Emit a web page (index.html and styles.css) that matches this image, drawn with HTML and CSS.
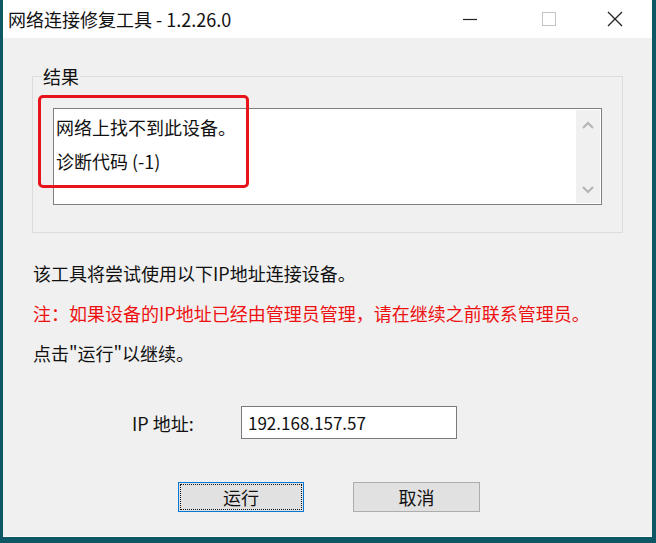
FILE: index.html
```html
<!DOCTYPE html>
<html lang="zh-CN">
<head>
    <meta charset="UTF-8">
    <title>网络连接修复工具</title>
    <link rel="stylesheet" href="styles.css">
</head>
<body>
    <div class="window">
        <div class="titlebar">
            <div class="title">网络连接修复工具 - 1.2.26.0</div>
            <div class="controls">
                <span class="ctl min">
                    <svg width="16" height="16" viewBox="0 0 16 16"><path d="M1 8.5h14" stroke="#222" stroke-width="1.2"/></svg>
                </span>
                <span class="ctl max">
                    <svg width="16" height="16" viewBox="0 0 16 16"><rect x="1.5" y="1.5" width="13" height="13" fill="none" stroke="#c4c4c4" stroke-width="1"/></svg>
                </span>
                <span class="ctl close">
                    <svg width="16" height="16" viewBox="0 0 16 16"><path d="M1 1l14 14M15 1L1 15" stroke="#222" stroke-width="1.3"/></svg>
                </span>
            </div>
        </div>

        <div class="content">
            <fieldset class="group">
                <legend>结果</legend>
                <div class="result-box">
                    <div class="result-text">
                        <div>网络上找不到此设备。</div>
                        <div>诊断代码 (-1)</div>
                    </div>
                    <div class="scrollbar">
                        <svg width="14" height="10" viewBox="0 0 14 10"><path d="M2 8l5-5 5 5" fill="none" stroke="#b4b4b4" stroke-width="2"/></svg>
                        <svg width="14" height="10" viewBox="0 0 14 10"><path d="M2 2l5 5 5-5" fill="none" stroke="#b4b4b4" stroke-width="2"/></svg>
                    </div>
                </div>
            </fieldset>

            <div class="info">
                <p>该工具将尝试使用以下IP地址连接设备。</p>
                <p class="warn">注：如果设备的IP地址已经由管理员管理，请在继续之前联系管理员。</p>
                <p>点击"运行"以继续。</p>
            </div>

            <div class="ip-row">
                <label for="ip">IP 地址:</label>
                <input type="text" id="ip" value="192.168.157.57">
            </div>

            <div class="buttons">
                <button class="btn default">运行</button>
                <button class="btn">取消</button>
            </div>
        </div>

        <!-- annotation drawn over the result box -->
        <div class="highlight"></div>
    </div>
</body>
</html>
```

FILE: styles.css
```css
body {
    margin: 0;
    padding: 0 4px 0 3px;
    background-color: #0e5866;
    font-family: "Noto Sans CJK SC", "Liberation Sans", sans-serif;
    color: #111;
    height: 543px;
    overflow: hidden;
}

.window {
    position: relative;
    width: 649px;
    height: 536px;
    background-color: #f0f0f0;
    border-bottom: 1px solid #fafafa;
}

.titlebar {
    height: 38px;
    background-color: #fff;
    display: flex;
    align-items: center;
    justify-content: space-between;
}

.title {
    font-size: 18px;
    padding-left: 5px;
    line-height: 38px;
}

.controls {
    display: flex;
    height: 38px;
    align-items: center;
}

.ctl {
    width: 16px;
    height: 16px;
    display: flex;
}

.ctl.max {
    margin-left: 63px;
}

.ctl.close {
    margin-left: 50px;
    margin-right: 29px;
}

.content {
    padding: 27px 0 0 29px;
}

.group {
    width: 549px;
    margin: 0;
    padding: 21px 20px 27px 20px;
    border: 1px solid #dcdcdc;
    min-width: 0;
}

.group legend {
    font-size: 18px;
    line-height: 22px;
    padding: 0 1px;
    margin-left: -11px;
}

.result-box {
    display: flex;
    height: 95px;
    border: 1px solid #7f7f7f;
    background-color: #fff;
}

.result-text {
    flex: 1;
    padding: 1px 0 0 2px;
    font-size: 18px;
    line-height: 34px;
}

.scrollbar {
    width: 24px;
    margin: 1px 1px 1px 0;
    background-color: #f0f0f0;
    display: flex;
    flex-direction: column;
    align-items: center;
    justify-content: space-between;
    padding: 10px 0 8px;
}

.info {
    margin-top: 20px;
    padding-left: 1px;
}

.info p {
    margin: 0;
    font-size: 18px;
    line-height: 40px;
}

.info .warn {
    color: #ee1111;
}

.ip-row {
    margin-top: 33px;
    display: flex;
    align-items: center;
    height: 33px;
}

.ip-row label {
    font-size: 18px;
    margin-left: 100px;
    width: 109px;
}

.ip-row input {
    width: 216px;
    height: 33px;
    box-sizing: border-box;
    border: 1px solid #7a7a7a;
    padding: 0 6px;
    font-family: "Noto Sans CJK SC", "Liberation Sans", sans-serif;
    font-size: 17px;
    color: #111;
    background: #fff;
    outline: none;
}

.buttons {
    margin-top: 43px;
    padding-left: 146px;
    display: flex;
    gap: 49px;
}

.btn {
    width: 127px;
    height: 30px;
    background-color: #e1e1e1;
    border: 1px solid #adadad;
    font-family: "Noto Sans CJK SC", sans-serif;
    font-size: 18px;
    color: #111;
    padding: 0;
    line-height: 26px;
}

.btn.default {
    border: 1px solid #0078d7;
    outline: 1px dotted #111;
    outline-offset: -3px;
    width: 126px;
}

.highlight {
    position: absolute;
    left: 35px;
    top: 95px;
    width: 205px;
    height: 87px;
    border: 3px solid #e8141c;
    border-radius: 5px;
}
```
